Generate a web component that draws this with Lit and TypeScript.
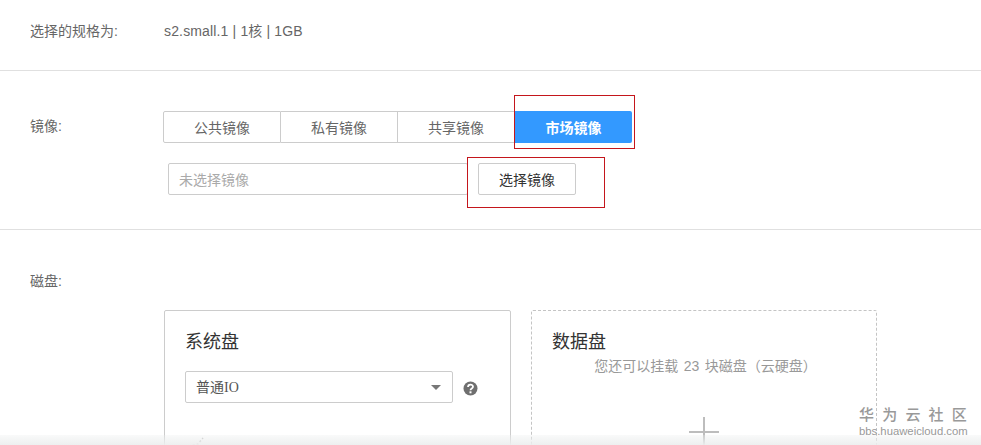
import { LitElement, html, css } from "lit";
import { customElement } from "lit/decorators.js";

@customElement("app-root")
export class AppRoot extends LitElement {
  static styles = css`
    :host {
      display: block;
      position: relative;
      width: 981px;
      height: 445px;
      overflow: hidden;
      background: #fff;
      color: #666;
      font: 14px/20px "Liberation Sans", "Noto Sans CJK SC", sans-serif;
    }
    .section { display: flex; padding-left: 30px; border-bottom: 1px solid #e0e0e0; box-sizing: border-box; }
    .label { width: 134px; flex: none; }
    .value { letter-spacing: 0.15px; }
    .spec { height: 71px; padding-top: 21px; }
    .image { height: 159px; padding-top: 45px; }
    .col { display: flex; flex-direction: column; }
    .image .label { width: 133px; }
    .tabs { display: flex; width: 469px; height: 32px; margin-top: -5px; box-sizing: border-box; }
    .tab {
      width: 117px; height: 32px; box-sizing: border-box; padding-top: 1px;
      border: 1px solid #ccc; border-left: none;
      display: flex; align-items: center; justify-content: center;
    }
    .tab:first-child { width: 118px; border-left: 1px solid #ccc; border-radius: 2px 0 0 2px; }
    .tab.on {
      background: #3399ff; border: none; color: #fff; font-weight: 700;
      border-radius: 0 2px 2px 0;
    }
    .pick { display: flex; margin: 20px 0 0 5px; height: 32px; }
    .input {
      width: 300px; box-sizing: border-box; border: 1px solid #ccc; border-radius: 2px;
      color: #aaa; padding: 1px 0 0 10px; display: flex; align-items: center;
    }
    .btn {
      width: 98px; margin-left: 10px; box-sizing: border-box; border: 1px solid #ccc; border-radius: 2px;
      color: #333; padding-top: 1px; display: flex; align-items: center; justify-content: center;
    }
    .disk { padding: 41px 0 0 30px; display: flex; }
    .cards { display: flex; gap: 20px; margin-top: 39px; }
    .card {
      height: 200px; box-sizing: border-box; padding: 19px 20px;
      border: 1px solid #ccc; border-radius: 2px; width: 347px;
    }
    .card.data { border: 1px dashed #c4c4c4; width: 346px; }
    h3 { margin: 0; font-size: 18px; font-weight: 400; line-height: 24px; color: #333; }
    .row { display: flex; align-items: center; margin-top: 17px; }
    .select {
      width: 268px; height: 32px; box-sizing: border-box; border: 1px solid #ccc; border-radius: 2px;
      display: flex; align-items: center; justify-content: space-between; padding: 1px 11px 0 10px; color: #555;
      font-family: "Liberation Serif", "Noto Sans CJK SC", serif;
    }
    .caret { width: 0; height: 0; border: 5px solid transparent; border-top-color: #777; border-bottom: none; }
    .help { margin: 2px 0 0 10px; display: block; }
    .chart { display: block; margin: 34px 0 0 3px; }
    .sub { color: #999; text-align: center; margin: 2px 0 0 3px; word-spacing: 1.5px; }
    .plus { display: block; margin: 41px auto 0; }
    .mark { position: absolute; border: 1px solid #c4161c; box-sizing: border-box; pointer-events: none; }
    .m1 { left: 514px; top: 95px; width: 121px; height: 54px; }
    .m2 { left: 467px; top: 157px; width: 138px; height: 51px; }
    .fade {
      position: absolute; left: 0; right: 0; bottom: 0; height: 10px;
      background: linear-gradient(rgba(236, 238, 238, 0.3), rgba(236, 238, 238, 0.95));
      pointer-events: none;
    }
    .wm {
      position: absolute; left: 859px; top: 403px; width: 110px; color: #999;
      display: flex; flex-direction: column;
    }
    .wm b { font: 500 15px/22px "Noto Sans CJK SC", sans-serif; letter-spacing: 8.2px; white-space: nowrap; }
    .wm span { font: 11.300px/13px "Liberation Sans", sans-serif; white-space: nowrap; }
  `;

  render() {
    return html`
      <div class="section spec">
        <div class="label">选择的规格为:</div>
        <div class="value">s2.small.1 | 1核 | 1GB</div>
      </div>
      <div class="section image">
        <div class="label">镜像:</div>
        <div class="col">
          <div class="tabs">
            <div class="tab">公共镜像</div>
            <div class="tab">私有镜像</div>
            <div class="tab">共享镜像</div>
            <div class="tab on">市场镜像</div>
          </div>
          <div class="pick">
            <div class="input">未选择镜像</div>
            <div class="btn">选择镜像</div>
          </div>
        </div>
      </div>
      <div class="disk">
        <div class="label">磁盘:</div>
        <div class="cards">
          <div class="card">
            <h3>系统盘</h3>
            <div class="row">
              <div class="select">普通IO<i class="caret"></i></div>
              <svg class="help" width="15" height="15" viewBox="0 0 15 15">
                <circle cx="7.5" cy="7.5" r="7" fill="#6f6f6f" />
                <path d="M5 6c0-3.2 5-3.2 5 -.2c0 1.8-2.500 1.700-2.500 3.400" fill="none" stroke="#fff" stroke-width="1.800" />
                <rect x="6.500" y="10.300" width="2" height="2" fill="#fff" />
              </svg>
            </div>
            <svg class="chart" width="20" height="14" viewBox="0 0 20 14">
              <path d="M1 10l5-2 4-1 5-6" fill="none" stroke="#bbb" stroke-width="1.500" stroke-dasharray="2 2" />
            </svg>
          </div>
          <div class="card data">
            <h3>数据盘</h3>
            <p class="sub">您还可以挂载 23 块磁盘（云硬盘）</p>
            <svg class="plus" width="30" height="30" viewBox="0 0 30 30">
              <path d="M15 0v30M0 15h30" stroke="#bdbdbd" stroke-width="2" />
            </svg>
          </div>
        </div>
      </div>
      <div class="mark m1"></div>
      <div class="mark m2"></div>
      <div class="fade"></div>
      <div class="wm"><b>华为云社区</b><span>bbs.huaweicloud.com</span></div>
    `;
  }
}
